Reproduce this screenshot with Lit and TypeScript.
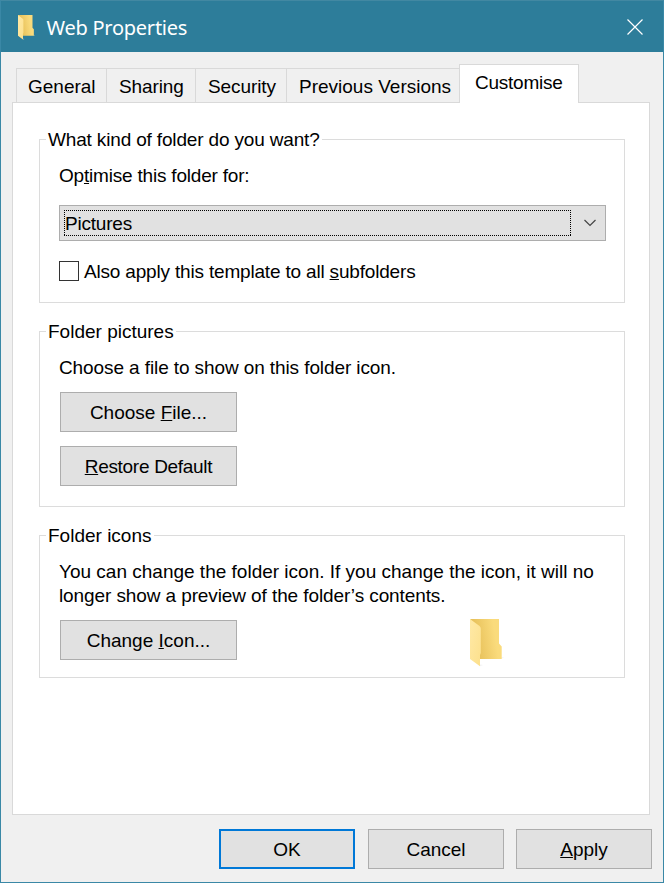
import { LitElement, html, css, svg } from "lit";
import { customElement, property } from "lit/decorators.js";

@customElement("folder-icon")
class FolderIcon extends LitElement {
  static styles = css`
    :host { display: block; }
    svg { display: block; width: 100%; height: 100%; }
  `;
  render() {
    return html`<svg viewBox="0 0 34 48" preserveAspectRatio="none">
      ${svg`
      <defs>
        <linearGradient id="back" x1="0" y1="0.6" x2="1" y2="0.4">
          <stop offset="0.2" stop-color="#e8c25c"></stop>
          <stop offset="0.8" stop-color="#fadb7c"></stop>
        </linearGradient>
        <linearGradient id="flap" x1="0" y1="0" x2="1" y2="1">
          <stop offset="0" stop-color="#ffe9a6"></stop>
          <stop offset="1" stop-color="#fce08c"></stop>
        </linearGradient>
      </defs>
      <path d="M10 47.2L13 46L10 45.500zM31 39.500L34 38.700L31.500 38z" fill="#ececec" fill-opacity="0.7"></path>
      <path d="M0.300 0H29V24.500L31.700 27.500V40H9L0.300 30z" fill="url(#back)"></path>
      <path d="M0 0L9.500 7Q10.800 8 10.800 9.500V34L10 36V47.200L0 40z" fill="url(#flap)"></path>
      `}
    </svg>`;
  }
}

@customElement("dialog-button")
class DialogButton extends LitElement {
  @property() before = "";
  @property() key = "";
  @property() after = "";
  @property({ type: Boolean, reflect: true }) primary = false;
  static styles = css`
    :host {
      display: flex; align-items: center; justify-content: center;
      box-sizing: border-box; width: 177px; height: 40px; padding-top: 2px;
      background: #e1e1e1; border: 1px solid #adadad; white-space: pre;
    }
    :host([primary]) { border: 2px solid #0078d7; }
    .key { text-decoration: underline 1px; text-underline-offset: 1px; text-decoration-skip-ink: none; }
  `;
  render() {
    return html`<span>${this.before}<span class="key">${this.key}</span>${this.after}</span>`;
  }
}

@customElement("app-root")
class AppRoot extends LitElement {
  static styles = css`
    :host {
      display: flex; flex-direction: column; box-sizing: border-box;
      width: 664px; height: 883px; background: #f0f0f0;
      border: 1px solid #3a88a6; border-top-color: #4288a2;
      font: 19px/24px "Liberation Sans", Arial, sans-serif; color: #000;
    }
    .titlebar {
      display: flex; align-items: center; height: 51px; flex: none;
      background: #2d7d9a; color: #fff; padding: 0 20px 0 16.5px;
    }
    .small-icon { width: 17px; height: 25px; margin-right: 12px; margin-top: 1px; }
    .title { flex: 1; font: 20px/28px "Noto Sans", "Open Sans", sans-serif; letter-spacing: -0.25px; margin-top: 2px; }
    .close { width: 16px; height: 16px; display: block; }
    .tabs { display: flex; align-items: flex-end; height: 39px; margin: 12px 0 -1px 15px; flex: none; z-index: 1; }
    .tab {
      box-sizing: border-box; height: 35px; border: 1px solid #d9d9d9; border-right: 0;
      padding: 6px 0 0 12px; white-space: nowrap;
    }
    .general { width: 90px; padding-left: 11px; }
    .sharing { width: 89px; letter-spacing: -0.1px; }
    .security { width: 91px; letter-spacing: -0.1px; }
    .previous { width: 173px; }
    .active {
      width: 120px; height: 39px; background: #fff; border-right: 1px solid #d9d9d9;
      border-bottom: 0; padding: 6px 0 0 15px; letter-spacing: -0.25px;
    }
    .panel {
      box-sizing: border-box; width: 638px; height: 713px; margin-left: 11px; flex: none;
      background: #fff; border: 1px solid #d9d9d9; padding: 25px 24px 0 26px;
      display: flex; flex-direction: column; gap: 17px;
    }
    fieldset { box-sizing: border-box; margin: 0; padding: 0 18px 0 19px; border: 1px solid #dcdcdc; flex: none; min-width: 0; }
    legend { padding: 0 2px; margin-left: -13px; line-height: 23px; }
    .kind { height: 175px; }
    .kind legend { letter-spacing: -0.16px; }
    .pictures { height: 187px; }
    .icons { height: 154px; }
    .line { margin-top: 13px; white-space: nowrap; }
    .optimise { letter-spacing: -0.2px; }
    .also { letter-spacing: -0.18px; }
    .choose { letter-spacing: -0.1px; }
    .longer { letter-spacing: -0.1px; }
    .key { text-decoration: underline 1px; text-underline-offset: 1px; text-decoration-skip-ink: none; }
    .combo {
      display: flex; align-items: center; box-sizing: border-box; width: 547px; height: 36px;
      margin-top: 17px; padding: 0 9px 0 4px; background: #e1e1e1; border: 1px solid #adadad;
    }
    .focus {
      box-sizing: border-box; width: 507px; height: 26px; padding: 2px 0 0 1px; letter-spacing: -0.2px;
      background:
        repeating-linear-gradient(90deg, #000 0 1px, transparent 1px 2px) top / 100% 1px no-repeat,
        repeating-linear-gradient(90deg, #000 0 1px, transparent 1px 2px) bottom / 100% 1px no-repeat,
        repeating-linear-gradient(#000 0 1px, transparent 1px 2px) left / 1px 100% no-repeat,
        repeating-linear-gradient(#000 0 1px, transparent 1px 2px) right / 1px 100% no-repeat;
    }
    .chevron { display: block; width: 12px; height: 8px; margin-left: 13px; }
    .check { display: flex; align-items: flex-start; gap: 5px; margin-top: 19px; white-space: nowrap; }
    .box { box-sizing: border-box; width: 20px; height: 20px; border: 1px solid #333; margin-top: 1px; }
    .first { margin: 12px 0 14px 1px; }
    .second { margin-left: 1px; letter-spacing: -0.3px; }
    .row { display: flex; justify-content: space-between; margin: 12px 102px 0 1px; }
    .large-icon { width: 34px; height: 48px; margin-top: -1px; }
    .actions { display: flex; gap: 13px; margin: 14px 0 0 218px; }
    .actions dialog-button { width: 136px; }
    .actions .apply { margin-left: -1px; }
  `;
  render() {
    return html`
      <header class="titlebar">
        <folder-icon class="small-icon"></folder-icon>
        <span class="title">Web Properties</span>
        <svg class="close" viewBox="0 0 16 16"><path d="M0.500 0.500L15.500 15.500M15.500 0.500L0.500 15.500" stroke="#fff" stroke-width="1.200"></path></svg>
      </header>
      <nav class="tabs">
        <div class="tab general">General</div>
        <div class="tab sharing">Sharing</div>
        <div class="tab security">Security</div>
        <div class="tab previous">Previous Versions</div>
        <div class="tab active">Customise</div>
      </nav>
      <main class="panel">
        <fieldset class="kind">
          <legend>What kind of folder do you want?</legend>
          <div class="line optimise">Op<span class="key">t</span>imise this folder for:</div>
          <div class="combo">
            <div class="focus">Pictures</div>
            <svg class="chevron" viewBox="0 0 12 8"><path d="M0.500 1L6 6.500L11.500 1" fill="none" stroke="#444" stroke-width="1.200"></path></svg>
          </div>
          <div class="check"><span class="box"></span><span class="also">Also apply this template to all <span class="key">s</span>ubfolders</span></div>
        </fieldset>
        <fieldset class="pictures">
          <legend>Folder pictures</legend>
          <div class="line choose">Choose a file to show on this folder icon.</div>
          <dialog-button class="first" before="Choose " key="F" after="ile..."></dialog-button>
          <dialog-button class="second" key="R" after="estore Default"></dialog-button>
        </fieldset>
        <fieldset class="icons">
          <legend>Folder icons</legend>
          <div class="line">You can change the folder icon. If you change the icon, it will no<br><span class="longer">longer show a preview of the folder’s contents.</span></div>
          <div class="row">
            <dialog-button before="Change " key="I" after="con..."></dialog-button>
            <folder-icon class="large-icon"></folder-icon>
          </div>
        </fieldset>
      </main>
      <footer class="actions">
        <dialog-button primary before="OK"></dialog-button>
        <dialog-button before="Cancel"></dialog-button>
        <dialog-button class="apply" key="A" after="pply"></dialog-button>
      </footer>
    `;
  }
}
